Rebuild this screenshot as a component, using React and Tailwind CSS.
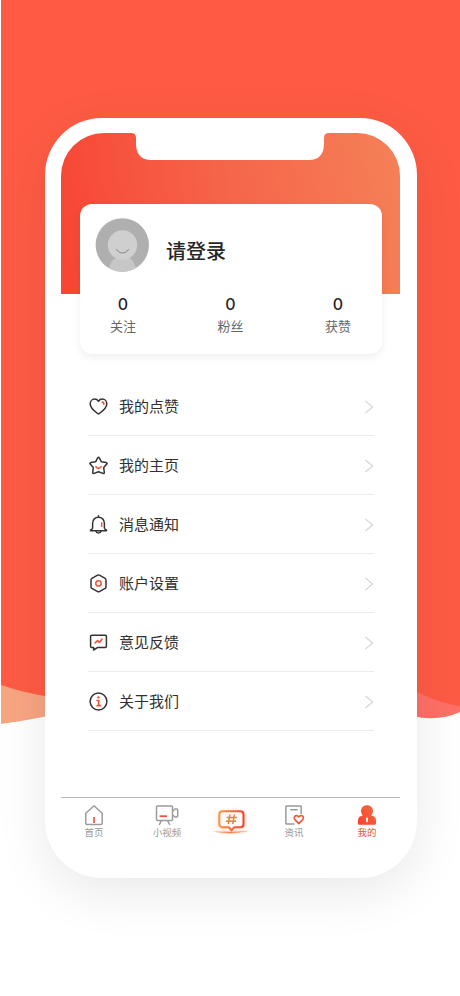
const INK = '#333333';
const RED = '#f5523c';
const GRAY = '#9b9b9b';

const stats = [
  { label: '关注', value: 0 },
  { label: '粉丝', value: 0 },
  { label: '获赞', value: 0 },
];

const menuItems = [
  { label: '我的点赞', Icon: HeartIcon },
  { label: '我的主页', Icon: StarIcon },
  { label: '消息通知', Icon: BellIcon },
  { label: '账户设置', Icon: SettingsIcon },
  { label: '意见反馈', Icon: FeedbackIcon },
  { label: '关于我们', Icon: InfoIcon },
];

function MenuSvg({ children }) {
  return (
    <svg
      className="mt-px ml-px h-5 w-5 shrink-0"
      viewBox="0 0 20 20"
      fill="none"
      stroke={INK}
      strokeWidth="1.5"
      strokeLinecap="round"
      strokeLinejoin="round"
    >
      {children}
    </svg>
  );
}

function HeartIcon() {
  return (
    <MenuSvg>
      <path d="M8.500 16.400C5.800 14.300 1.200 11 1.200 6.900 1.200 4 3.200 2.100 5.600 2.100c1.700 0 3 .8 3.900 2.100.9-1.300 2.200-2.100 3.900-2.100 2.400 0 4.400 1.900 4.400 4.800 0 4.100-4.600 7.400-7.300 9.500q-1 .8-2 0Z" />
      <path d="M13.200 5.100c1.200.2 1.800 1 1.700 2.200" stroke={RED} strokeWidth="1.600" />
    </MenuSvg>
  );
}

function StarIcon() {
  return (
    <MenuSvg>
      <path d="M8.700 1.800q.8-1.300 1.600 0l2.100 4 4.800.8q1.500.4.600 1.500l-3.100 3.400.6 5q0 1.400-1.300.9L9.500 15.700 5 17.400q-1.300.5-1.300-.9l.6-5L1.200 8.100q-.9-1.100.6-1.500l4.800-.8Z" />
      <path d="M6.900 10.600c1.300 2.300 3.900 2.300 5.200 0" stroke={RED} strokeWidth="1.600" />
    </MenuSvg>
  );
}

function BellIcon() {
  return (
    <MenuSvg>
      <path d="M9.500.800v1.300M3.600 13.200V8.200C3.600 4.700 6.200 2.200 9.500 2.200s5.900 2.500 5.900 6v5q.2 1 1.400 1.400 1 .4.700 1.100H1.500q-.3-.7.700-1.100 1.200-.4 1.400-1.400Z" />
      <path d="M7 16.200c.4 2.400 4.600 2.400 5 0" />
      <path d="M12.700 7.300v4.500" stroke={RED} strokeLinecap="butt" />
    </MenuSvg>
  );
}

function SettingsIcon() {
  return (
    <MenuSvg>
      <path d="M8.600 1.200q.9-.5 1.800 0l5.700 3.200q.9.500.9 1.500v7q0 1-.9 1.500l-5.700 3.200q-.9.500-1.800 0l-5.700-3.200q-.9-.5-.9-1.500v-7q0-1 .9-1.500Z" />
      <circle cx="9.500" cy="9.400" r="2.700" stroke={RED} />
    </MenuSvg>
  );
}

function FeedbackIcon() {
  return (
    <MenuSvg>
      <path d="M2.600 2.300h13.800q1 0 1 1v10.100q0 1-1 1H8.800L4.600 17v-2.600h-2q-1 0-1-1V3.300q0-1 1-1Z" />
      <path d="m6.100 9.900 2.500-2.200 1.800 1.700 2.600-3.200" stroke={RED} strokeWidth="1.600" />
    </MenuSvg>
  );
}

function InfoIcon() {
  return (
    <MenuSvg>
      <circle cx="9.500" cy="9.500" r="8.400" />
      <g stroke={RED}>
        <path d="M8.100 8.500h1.600v5M8.200 13.700h3.200" strokeWidth="1.700" />
        <circle cx="9.300" cy="5.400" r=".8" fill={RED} strokeWidth=".8" />
      </g>
    </MenuSvg>
  );
}

function TabSvg({ children }) {
  return (
    <svg className="h-6 w-6 shrink-0" viewBox="0 0 24 24" fill="none" stroke={GRAY} strokeWidth="1.5">
      {children}
    </svg>
  );
}

function HomeIcon() {
  return (
    <TabSvg>
      <path d="M3.800 10.200 12 2.700l8.200 7.500v10.300q0 1-1 1H4.800q-1 0-1-1Z" strokeLinejoin="round" />
      <path d="M12 13.900v6" stroke={RED} strokeWidth="1.700" />
    </TabSvg>
  );
}

function VideoIcon() {
  return (
    <TabSvg>
      <rect x="1.500" y="3" width="16" height="14.500" rx="1" />
      <path d="M17.700 8 20 5.900h1.500q1.200 0 1.200 1.200v5.700q0 1.200-1.200 1.200H20l-2.300-2M6.500 17.500 4.200 22M12.500 17.500l2.300 4.500" />
      <path d="M4.500 13.200h7.600" stroke={RED} strokeWidth="1.800" />
    </TabSvg>
  );
}

function NewsIcon() {
  return (
    <TabSvg>
      <path d="M19.200 11V3.600q0-.7-.7-.7H4.600q-.7 0-.7.700v16.800q0 .7.700.7h7.800M8.300 6.700h7.400" />
      <path
        d="m16.800 20.600-3.700-3.700c-1.200-1.200-1.100-2.900-.1-3.700 1.200-1 2.800-.6 3.800.7 1-1.300 2.600-1.700 3.800-.7 1 .8 1.100 2.500-.1 3.700Z"
        stroke={RED}
        strokeWidth="1.600"
        strokeLinejoin="round"
      />
    </TabSvg>
  );
}

function MineIcon() {
  return (
    <TabSvg>
      <defs>
        <linearGradient id="mine" x1="0" y1="1" x2="1" y2="0">
          <stop offset="0" stopColor="#fb3f2b" />
          <stop offset="1" stopColor="#f26d45" />
        </linearGradient>
      </defs>
      <path
        d="M12 2.200c3.500 0 6 2.400 6 5.700 0 1.900-.8 3.500-2 4.600 2.900.3 5 2 5 4.700v3.200q0 1.400-1.400 1.400H4.400Q3 21.800 3 20.400v-3.200c0-2.700 2.100-4.400 5-4.700-1.200-1.100-2-2.700-2-4.600 0-3.300 2.500-5.700 6-5.700Z"
        fill="url(#mine)"
        stroke="none"
      />
      <path d="M12 14.200 13.100 15.300 12.700 19.200h-1.400l-.4-3.900Z" fill="white" stroke="none" />
    </TabSvg>
  );
}

function TopicIcon() {
  return (
    <svg className="h-9 w-12" viewBox="0 0 48 36" fill="none">
      <defs>
        <linearGradient id="topic" x1="0" y1="0" x2="1" y2="0">
          <stop offset="0" stopColor="#f99749" />
          <stop offset="1" stopColor="#f3432f" />
        </linearGradient>
        <linearGradient id="swoosh" x1="0" y1="0" x2="1" y2="0">
          <stop offset="0" stopColor="#f8ac70" stopOpacity=".3" />
          <stop offset=".45" stopColor="#f27949" />
          <stop offset="1" stopColor="#f8a070" stopOpacity=".3" />
        </linearGradient>
        <filter id="glow" x="-30%" y="-40%" width="160%" height="180%">
          <feGaussianBlur stdDeviation="2.500" />
        </filter>
      </defs>
      <rect x="10" y="7" width="29" height="21" rx="5" fill="#f9a47c" opacity=".25" filter="url(#glow)" />
      <path d="M7 27.500q17 1.500 34-.5-17 3.800-34 .5Z" fill="url(#swoosh)" stroke="url(#swoosh)" strokeWidth=".8" />
      <path
        d="M15.600 7.200h17.600q3.300 0 3.300 3.300v9.400q0 3.300-3.300 3.300h-6l-2.700 3-2.700-3h-6.200q-3.300 0-3.300-3.300v-9.400q0-3.300 3.300-3.300Z"
        fill="#fffaf7"
        stroke="url(#topic)"
        strokeWidth="2.100"
      />
      <path
        d="m22.900 10.500-1.600 9.600M27.400 10.500l-1.600 9.600M19.600 13.400h10.200M19 17.300h10.200"
        stroke="#f27b3e"
        strokeWidth="1.500"
      />
    </svg>
  );
}

function Tab({ icon, label, active }) {
  return (
    <div className="flex w-8 flex-col items-center">
      {icon}
      <span
        className={`-mt-px whitespace-nowrap text-[9.500px] leading-3 ${active ? 'text-[#f4513a]' : 'text-[#999999]'}`}
      >
        {label}
      </span>
    </div>
  );
}

function Backdrop() {
  return (
    <svg className="absolute inset-0 h-full w-full" viewBox="0 0 460 996">
      <path d="M1 680Q30 692 90 700V706Q45 718 1 724Z" fill="#f8a582" />
      <path d="M380 680H460V712Q438 722 412 716L380 705Z" fill="#ff7066" />
      <path d="M1 0H460V706Q436 703 410 688L360 660L120 702Q50 702 1 685Z" fill="#ff5b44" />
    </svg>
  );
}

function Avatar() {
  return (
    <svg className="h-[54px] w-[54px]" viewBox="0 0 54 54">
      <defs>
        <clipPath id="avatar">
          <circle cx="27.300" cy="27" r="26.700" />
        </clipPath>
      </defs>
      <g clipPath="url(#avatar)">
        <rect width="54" height="54" fill="#afafaf" />
        <path d="M13 54q2-13 9-14h12q5 1 8 14Z" fill="#c7c7c7" />
        <circle cx="27.500" cy="27" r="14.700" fill="#cfcfcf" />
        <path d="M21.300 31.500q6.200 7 12.400 0" fill="none" stroke="#8d8d8d" strokeWidth="1.100" strokeLinecap="round" />
      </g>
    </svg>
  );
}

function Hero() {
  return (
    <div className="flex h-[161px] rounded-t-[43px] bg-[linear-gradient(80deg,#f84434_0%,#f5664a_52%,#f58157_100%)] pl-[70px]">
      {/* Notch */}
      <svg className="h-[27px] w-[198px]" viewBox="0 0 198 27">
        <path d="M0 0Q5 0 5 5V12Q6 27 20 27H178Q192 27 193 12V5Q193 0 198 0Z" fill="white" />
      </svg>
    </div>
  );
}

function ProfileCard() {
  return (
    <section className="relative -mt-[90px] ml-[19px] h-[150px] w-[302px] rounded-xl bg-white shadow-[0_3px_8px_rgba(0,0,0,0.07)]">
      <div className="flex items-center gap-[17px] pt-[14px] pl-[15px]">
        <Avatar />
        <h1 className="pt-3 text-xl leading-7 font-medium text-[#272727]">请登录</h1>
      </div>
      <div className="mt-[22px] flex justify-between pr-[31px] pl-[30px]">
        {stats.map(({ label, value }) => (
          <div key={label} className="flex w-[26px] flex-col items-center">
            <span className="font-['Inter',sans-serif] text-base leading-5 font-medium text-[#272727]">{value}</span>
            <span className="mt-0.5 text-[13px] leading-5 whitespace-nowrap text-[#666666]">{label}</span>
          </div>
        ))}
      </div>
    </section>
  );
}

function MenuRow({ label, Icon }) {
  return (
    <li className="flex h-[59px] items-center border-b border-[#ebebeb]">
      <Icon />
      <span className="ml-2.5 text-[15px] leading-6 text-[#303030]">{label}</span>
      <svg className="mt-px ml-auto h-3.5 w-2.5" viewBox="0 0 10 14" fill="none">
        <path d="m1.500 1 7 6-7 6" stroke="#d6d6d6" strokeWidth="1.200" />
      </svg>
    </li>
  );
}

export default function App() {
  return (
    <div className="relative h-[996px] w-[460px] overflow-hidden bg-white pt-[118px] pl-[45px] font-['Noto_Sans_CJK_SC',sans-serif]">
      <Backdrop />

      {/* Phone */}
      <main className="relative h-[760px] w-[372px] rounded-[57px] bg-white pt-[15px] pr-[17px] pl-4 shadow-[0_14px_52px_rgba(0,0,0,0.09)]">
        <Hero />
        <ProfileCard />

        <ul className="mt-[23px] ml-[27px] w-[286px]">
          {menuItems.map((item) => (
            <MenuRow key={item.label} {...item} />
          ))}
        </ul>

        <nav className="mt-[66px] flex border-t border-[#b8b8b8] pt-[5px] pl-[17px]">
          <Tab icon={<HomeIcon />} label="首页" />
          <div className="ml-[41px]">
            <Tab icon={<VideoIcon />} label="小视频" />
          </div>
          <div className="ml-6 pt-px">
            <TopicIcon />
          </div>
          <div className="ml-[23px]">
            <Tab icon={<NewsIcon />} label="资讯" />
          </div>
          <div className="ml-[41px]">
            <Tab icon={<MineIcon />} label="我的" active />
          </div>
        </nav>
      </main>
    </div>
  );
}
